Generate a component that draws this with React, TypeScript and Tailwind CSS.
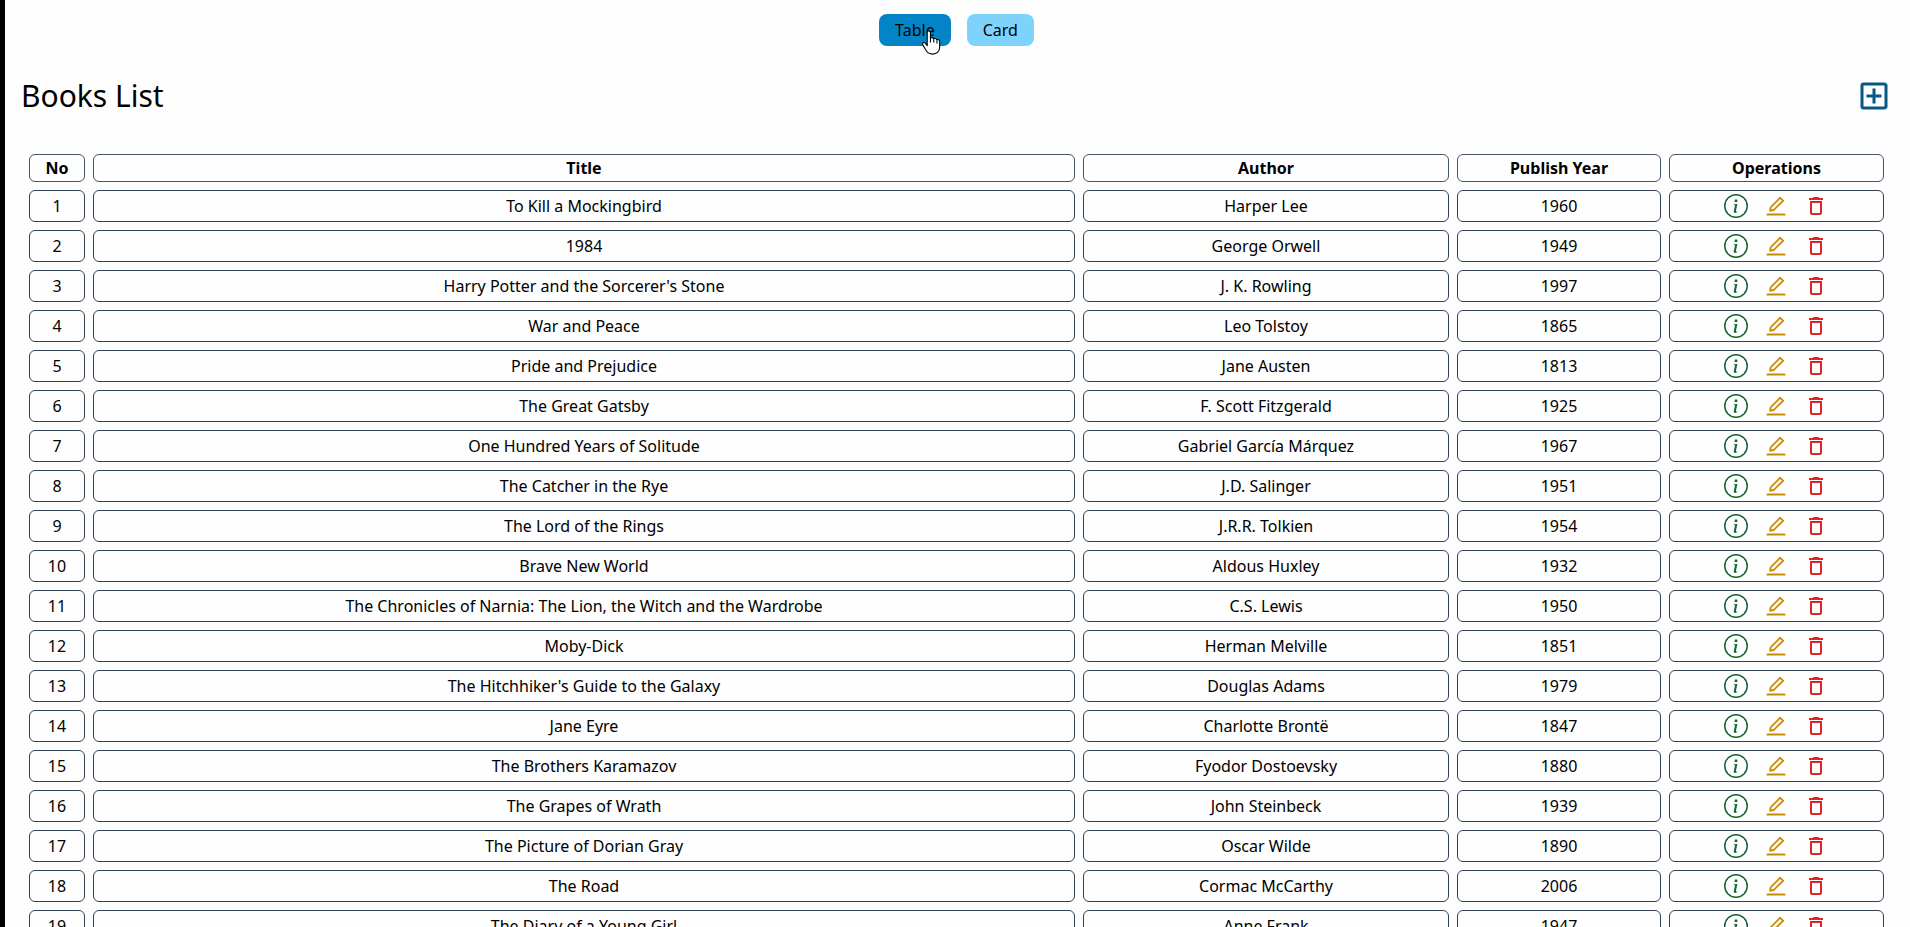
import { AiOutlineEdit } from "react-icons/ai";
import { BsInfoCircle } from "react-icons/bs";
import { MdOutlineAddBox, MdOutlineDelete } from "react-icons/md";

const books: [string, string, number][] = [
  ["To Kill a Mockingbird", "Harper Lee", 1960],
  ["1984", "George Orwell", 1949],
  ["Harry Potter and the Sorcerer's Stone", "J. K. Rowling", 1997],
  ["War and Peace", "Leo Tolstoy", 1865],
  ["Pride and Prejudice", "Jane Austen", 1813],
  ["The Great Gatsby", "F. Scott Fitzgerald", 1925],
  ["One Hundred Years of Solitude", "Gabriel García Márquez", 1967],
  ["The Catcher in the Rye", "J.D. Salinger", 1951],
  ["The Lord of the Rings", "J.R.R. Tolkien", 1954],
  ["Brave New World", "Aldous Huxley", 1932],
  ["The Chronicles of Narnia: The Lion, the Witch and the Wardrobe", "C.S. Lewis", 1950],
  ["Moby-Dick", "Herman Melville", 1851],
  ["The Hitchhiker's Guide to the Galaxy", "Douglas Adams", 1979],
  ["Jane Eyre", "Charlotte Brontë", 1847],
  ["The Brothers Karamazov", "Fyodor Dostoevsky", 1880],
  ["The Grapes of Wrath", "John Steinbeck", 1939],
  ["The Picture of Dorian Gray", "Oscar Wilde", 1890],
  ["The Road", "Cormac McCarthy", 2006],
  ["The Diary of a Young Girl", "Anne Frank", 1947],
];

const th = "rounded-md border border-[#475569] p-px font-bold";
const td = "rounded-md border border-[#334155] p-0 text-center";

function HandPointer() {
  return (
    <svg
      className="pointer-events-none absolute top-4 left-[42px] h-[26px] w-5"
      viewBox="0 0 18 24"
      aria-hidden="true"
    >
      <path
        d="M5.5 14.5V2.3c0-2 3-2 3 0v5.4c.6-1 2.8-.9 3 .6.7-.9 2.7-.6 2.9.8.9-.7 2.6-.1 2.6 1.4V16c0 3.500-2.500 6.300-6.500 6.300-3.500 0-5-1.500-6.300-3.800L1.300 13.500C.5 11.800 2.500 10.800 3.700 12.200Z"
        fill="#fff"
        stroke="#000"
        strokeLinejoin="round"
      />
      <path d="M8.500 7.500v4M11.500 8.500v3M14.500 9.500v3" stroke="#000" />
    </svg>
  );
}

export default function App() {
  return (
    <div className="h-screen overflow-hidden border-l-[5px] border-black bg-[#fefefe] pt-3.5 pr-[18px] pl-4 font-['Noto_Sans',sans-serif] text-base leading-6 text-black">
      <div className="flex items-center justify-center gap-x-4">
        <button className="relative rounded-lg bg-[#0284c7] px-4 py-1">
          Table
          <HandPointer />
        </button>
        <button className="rounded-lg bg-[#7dd3fc] px-4 py-1">Card</button>
      </div>
      <div className="flex items-center justify-between">
        <h1 className="my-8 text-3xl">Books List</h1>
        <a href="#create" aria-label="Add book">
          <MdOutlineAddBox className="text-4xl text-[#075985]" />
        </a>
      </div>
      <table className="w-full table-fixed border-separate border-spacing-2">
        <colgroup>
          <col className="w-14" />
          <col />
          <col className="w-[366px]" />
          <col className="w-[204px]" />
          <col className="w-[215px]" />
        </colgroup>
        <thead>
          <tr>
            <th className={th}>No</th>
            <th className={th}>Title</th>
            <th className={th}>Author</th>
            <th className={th}>Publish Year</th>
            <th className={th}>Operations</th>
          </tr>
        </thead>
        <tbody>
          {books.map(([title, author, year], i) => (
            <tr key={title} className="h-8">
              <td className={td}>{i + 1}</td>
              <td className={td}>{title}</td>
              <td className={td}>{author}</td>
              <td className={td}>{year}</td>
              <td className={td}>
                <div className="flex justify-center gap-x-4 pr-px text-2xl">
                  <a href={`#details-${i + 1}`} aria-label={`Details of ${title}`}>
                    <BsInfoCircle className="text-[#166534]" />
                  </a>
                  <a href={`#edit-${i + 1}`} aria-label={`Edit ${title}`}>
                    <AiOutlineEdit className="text-[#ca8a04]" />
                  </a>
                  <a href={`#delete-${i + 1}`} aria-label={`Delete ${title}`}>
                    <MdOutlineDelete className="text-[#dc2626]" />
                  </a>
                </div>
              </td>
            </tr>
          ))}
        </tbody>
      </table>
    </div>
  );
}
